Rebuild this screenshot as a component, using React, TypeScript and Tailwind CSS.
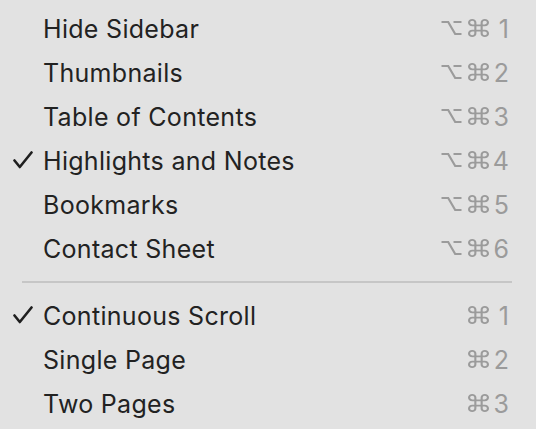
import React from "react";

type Item = { label: string; checked?: boolean; alt?: boolean; key: string };

const group1: Item[] = [
  { label: "Hide Sidebar", alt: true, key: "1" },
  { label: "Thumbnails", alt: true, key: "2" },
  { label: "Table of Contents", alt: true, key: "3" },
  { label: "Highlights and Notes", alt: true, key: "4", checked: true },
  { label: "Bookmarks", alt: true, key: "5" },
  { label: "Contact Sheet", alt: true, key: "6" },
];

const group2: Item[] = [
  { label: "Continuous Scroll", key: "1", checked: true },
  { label: "Single Page", key: "2" },
  { label: "Two Pages", key: "3" },
];

function Check() {
  return (
    <svg width="20" height="18" viewBox="0 0 20 18" fill="none">
      <path
        d="M1.5 9.5 L6.8 16 L18.5 1.5"
        stroke="#1f1f1f"
        strokeWidth="2.6"
        strokeLinecap="round"
        strokeLinejoin="round"
      />
    </svg>
  );
}

function OptionKey() {
  return (
    <svg width="21" height="16" viewBox="0 0 21 16" fill="none">
      <path
        d="M0.5 2 H7.2 L14.2 14 H20.5 M12.5 2 H20.5"
        stroke="#9b9b9b"
        strokeWidth="2.2"
        strokeLinejoin="miter"
      />
    </svg>
  );
}

function CommandKey() {
  return (
    <svg
      width="21"
      height="18"
      viewBox="2 2 20 20"
      preserveAspectRatio="none"
      fill="none"
    >
      <path
        d="M15 6v12a3 3 0 1 0 3-3H6a3 3 0 1 0 3 3V6a3 3 0 1 0-3 3h12a3 3 0 1 0-3-3"
        stroke="#9b9b9b"
        strokeWidth="2"
        strokeLinejoin="round"
      />
    </svg>
  );
}

function Row({ item }: { item: Item }) {
  return (
    <div className="flex h-[44px] items-center pl-[13px] pr-[27px]">
      <div className="flex w-[30px] items-center">{item.checked ? <Check /> : null}</div>
      <div className="flex-1 pt-[2px] text-[25px] leading-none tracking-[0.3px] text-[#222222] [font-family:Inter,'Noto_Sans',sans-serif]">
        {item.label}
      </div>
      <div className="flex items-center text-[#9b9b9b]">
        <span className="flex w-[21px] items-center">{item.alt ? <OptionKey /> : null}</span>
        <span className="ml-[6px] flex w-[21px] items-center">
          <CommandKey />
        </span>
        <span className="w-[20px] pt-[2px] text-right text-[25px] leading-none [font-family:Inter,sans-serif]">
          {item.key}
        </span>
      </div>
    </div>
  );
}

export default function App() {
  return (
    <div className="h-[429px] w-[536px] overflow-hidden bg-[#e2e2e2] pt-[6px]">
      {group1.map((it) => (
        <Row key={it.label} item={it} />
      ))}
      <div className="flex h-[23px] items-center px-[22px] pr-[24px]">
        <div className="h-[2px] w-full bg-[#c6c6c6]" />
      </div>
      {group2.map((it) => (
        <Row key={it.label} item={it} />
      ))}
    </div>
  );
}
